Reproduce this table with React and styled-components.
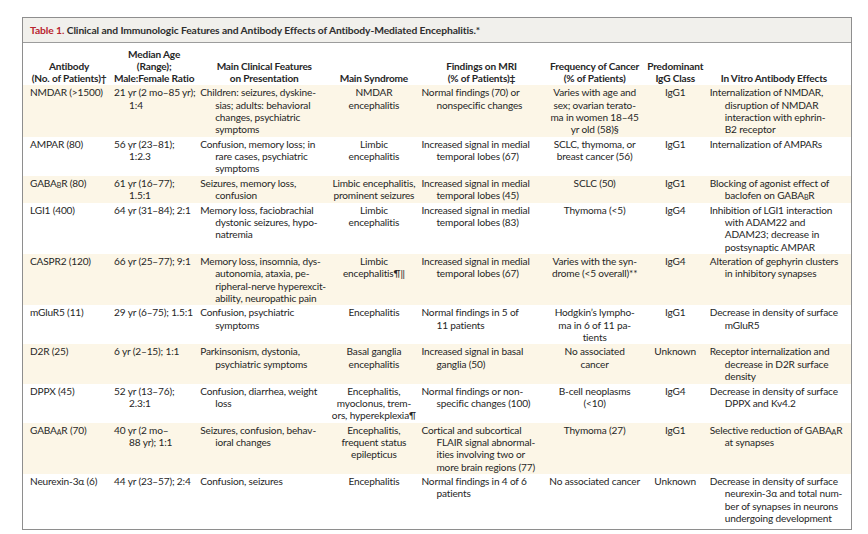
import React from 'react';
import styled, { createGlobalStyle } from 'styled-components';

const GlobalStyle = createGlobalStyle`
  html, body {
    margin: 0;
    padding: 0;
    background: #ffffff;
  }
  body {
    font-family: "Lato", "Liberation Sans", sans-serif;
    color: #262626;
  }
`;

const GabaB = () => (
  <>
    GABA<Sub>B</Sub>R
  </>
);

const GabaA = () => (
  <>
    GABA<Sub>A</Sub>R
  </>
);

// each cell is a list of printed lines, as broken in the journal
const rows = [
  {
    name: 'NMDAR (>1500)',
    age: ['21 yr (2 mo–85 yr);', '1:4'],
    clinical: ['Children: seizures, dyskine-', 'sias; adults: behavioral', 'changes, psychiatric', 'symptoms'],
    syndrome: ['NMDAR', 'encephalitis'],
    mri: ['Normal findings (70) or', 'nonspecific changes'],
    cancer: ['Varies with age and', 'sex; ovarian terato-', 'ma in women 18–45', 'yr old (58)§'],
    igg: ['IgG1'],
    effects: ['Internalization of NMDAR,', 'disruption of NMDAR', 'interaction with ephrin-', 'B2 receptor'],
  },
  {
    name: 'AMPAR (80)',
    age: ['56 yr (23–81);', '1:2.3'],
    clinical: ['Confusion, memory loss; in', 'rare cases, psychiatric', 'symptoms'],
    syndrome: ['Limbic', 'encephalitis'],
    mri: ['Increased signal in medial', 'temporal lobes (67)'],
    cancer: ['SCLC, thymoma, or', 'breast cancer (56)'],
    igg: ['IgG1'],
    effects: ['Internalization of AMPARs'],
  },
  {
    name: (
      <>
        <GabaB /> (80)
      </>
    ),
    age: ['61 yr (16–77);', '1.5:1'],
    clinical: ['Seizures, memory loss,', 'confusion'],
    syndrome: ['Limbic encephalitis,', 'prominent seizures'],
    mri: ['Increased signal in medial', 'temporal lobes (45)'],
    cancer: ['SCLC (50)'],
    igg: ['IgG1'],
    effects: [
      'Blocking of agonist effect of',
      <>
        baclofen on <GabaB />
      </>,
    ],
  },
  {
    name: 'LGI1 (400)',
    age: ['64 yr (31–84); 2:1'],
    clinical: ['Memory loss, faciobrachial', 'dystonic seizures, hypo-', 'natremia'],
    syndrome: ['Limbic', 'encephalitis'],
    mri: ['Increased signal in medial', 'temporal lobes (83)'],
    cancer: ['Thymoma (<5)'],
    igg: ['IgG4'],
    effects: ['Inhibition of LGI1 interaction', 'with ADAM22 and', 'ADAM23; decrease in', 'postsynaptic AMPAR'],
  },
  {
    name: 'CASPR2 (120)',
    age: ['66 yr (25–77); 9:1'],
    clinical: ['Memory loss, insomnia, dys-', 'autonomia, ataxia, pe-', 'ripheral-nerve hyperexcit-', 'ability, neuropathic pain'],
    syndrome: ['Limbic', 'encephalitis¶‖'],
    mri: ['Increased signal in medial', 'temporal lobes (67)'],
    cancer: ['Varies with the syn-', 'drome (<5 overall)**'],
    igg: ['IgG4'],
    effects: ['Alteration of gephyrin clusters', 'in inhibitory synapses'],
  },
  {
    name: 'mGluR5 (11)',
    age: ['29 yr (6–75); 1.5:1'],
    clinical: ['Confusion, psychiatric', 'symptoms'],
    syndrome: ['Encephalitis'],
    mri: ['Normal findings in 5 of', '11 patients'],
    cancer: ['Hodgkin’s lympho-', 'ma in 6 of 11 pa-', 'tients'],
    igg: ['IgG1'],
    effects: ['Decrease in density of surface', 'mGluR5'],
  },
  {
    name: 'D2R (25)',
    age: ['6 yr (2–15); 1:1'],
    clinical: ['Parkinsonism, dystonia,', 'psychiatric symptoms'],
    syndrome: ['Basal ganglia', 'encephalitis'],
    mri: ['Increased signal in basal', 'ganglia (50)'],
    cancer: ['No associated', 'cancer'],
    igg: ['Unknown'],
    effects: ['Receptor internalization and', 'decrease in D2R surface', 'density'],
  },
  {
    name: 'DPPX (45)',
    age: ['52 yr (13–76);', '2.3:1'],
    clinical: ['Confusion, diarrhea, weight', 'loss'],
    syndrome: ['Encephalitis,', 'myoclonus, trem-', 'ors, hyperekplexia¶'],
    mri: ['Normal findings or non-', 'specific changes (100)'],
    cancer: ['B-cell neoplasms', '(<10)'],
    igg: ['IgG4'],
    effects: ['Decrease in density of surface', 'DPPX and Kv4.2'],
  },
  {
    name: (
      <>
        <GabaA /> (70)
      </>
    ),
    age: ['40 yr (2 mo–', '88 yr); 1:1'],
    clinical: ['Seizures, confusion, behav-', 'ioral changes'],
    syndrome: ['Encephalitis,', 'frequent status', 'epilepticus'],
    mri: ['Cortical and subcortical', 'FLAIR signal abnormal-', 'ities involving two or', 'more brain regions (77)'],
    cancer: ['Thymoma (27)'],
    igg: ['IgG1'],
    effects: [
      <>
        Selective reduction of <GabaA />
      </>,
      'at synapses',
    ],
  },
  {
    name: 'Neurexin-3α (6)',
    age: ['44 yr (23–57); 2:4'],
    clinical: ['Confusion, seizures'],
    syndrome: ['Encephalitis'],
    mri: ['Normal findings in 4 of 6', 'patients'],
    cancer: ['No associated cancer'],
    igg: ['Unknown'],
    effects: ['Decrease in density of surface', 'neurexin-3α and total num-', 'ber of synapses in neurons', 'undergoing development'],
  },
];

function Lines({ items }) {
  return items.map((line, i) => (
    <React.Fragment key={i}>
      {i > 0 && <br />}
      {line}
    </React.Fragment>
  ));
}

export default function App() {
  return (
    <Page>
      <GlobalStyle />
      <Frame>
        <TitleBar>
          <TableNo>Table 1.</TableNo>
          &nbsp;Clinical and Immunologic Features and Antibody Effects of Antibody-Mediated Encephalitis.*
        </TitleBar>
        <Table>
          <colgroup>
            <col style={{ width: 87 }} />
            <col style={{ width: 88 }} />
            <col style={{ width: 132 }} />
            <col style={{ width: 87 }} />
            <col style={{ width: 128 }} />
            <col style={{ width: 98 }} />
            <col style={{ width: 63 }} />
            <col style={{ width: 144 }} />
          </colgroup>
          <thead>
            <tr>
              <Th $padLeft={5}>
                Antibody
                <br />
                (No. of Patients)†
              </Th>
              <Th>
                Median Age
                <br />
                (Range);
                <br />
                Male:Female Ratio
              </Th>
              <Th>
                Main Clinical Features
                <br />
                on Presentation
              </Th>
              <Th>Main Syndrome</Th>
              <Th>
                Findings on MRI
                <br />
                (% of Patients)‡
              </Th>
              <Th>
                Frequency of Cancer
                <br />
                (% of Patients)
              </Th>
              <Th>
                Predominant
                <br />
                IgG Class
              </Th>
              <Th $padRight={10}>In Vitro Antibody Effects</Th>
            </tr>
          </thead>
          <tbody>
            {rows.map((row, i) => (
              <Row key={i} $shaded={i % 2 === 0}>
                <Cell $padLeft={7}>{row.name}</Cell>
                <Cell $padLeft={4} $hang>
                  <Lines items={row.age} />
                </Cell>
                <Cell $padLeft={2} $hang>
                  <Lines items={row.clinical} />
                </Cell>
                <Cell $center>
                  <Lines items={row.syndrome} />
                </Cell>
                <Cell $padLeft={4} $hang>
                  <Lines items={row.mri} />
                </Cell>
                <Cell $center>
                  <Lines items={row.cancer} />
                </Cell>
                <Cell $center>
                  <Lines items={row.igg} />
                </Cell>
                <Cell $padLeft={3} $hang>
                  <Lines items={row.effects} />
                </Cell>
              </Row>
            ))}
          </tbody>
        </Table>
      </Frame>
    </Page>
  );
}

const Page = styled.div`
  padding: 17px 0 0 22px;
`;

const Frame = styled.div`
  width: 830px;
  box-sizing: border-box;
  border: 1.5px solid #8e8e8e;
  padding-bottom: 4px;
  background: #ffffff;
`;

const TitleBar = styled.div`
  display: flex;
  align-items: center;
  height: 24px;
  padding-left: 7px;
  background: #f1f0ec;
  border-bottom: 1.5px solid #9c9c9c;
  font-size: 10.3px;
  letter-spacing: -0.1px;
  font-weight: 700;
  color: #2e2e2e;
  white-space: nowrap;
`;

const TableNo = styled.span`
  color: #b8252f;
`;

const Table = styled.table`
  width: 100%;
  table-layout: fixed;
  border-collapse: collapse;
  font-size: 10.1px;
  letter-spacing: -0.16px;
`;

const Th = styled.th`
  vertical-align: bottom;
  text-align: center;
  font-weight: 700;
  line-height: 11.8px;
  padding: 6px ${(p) => p.$padRight || 0}px 1px ${(p) => p.$padLeft || 0}px;
  white-space: nowrap;
  color: #262626;
`;

const Row = styled.tr`
  background: ${(p) => (p.$shaded ? '#fcf6e7' : '#ffffff')};
`;

const Cell = styled.td`
  vertical-align: top;
  line-height: 12.3px;
  white-space: nowrap;
  text-align: ${(p) => (p.$center ? 'center' : 'left')};
  padding: 1px 0 1.2px ${(p) => (p.$padLeft || 0) + (p.$hang ? 15 : 0)}px;
  text-indent: ${(p) => (p.$hang ? -15 : 0)}px;
`;

const Sub = styled.sub`
  font-size: 7px;
  vertical-align: -1px;
  line-height: 0;
`;
